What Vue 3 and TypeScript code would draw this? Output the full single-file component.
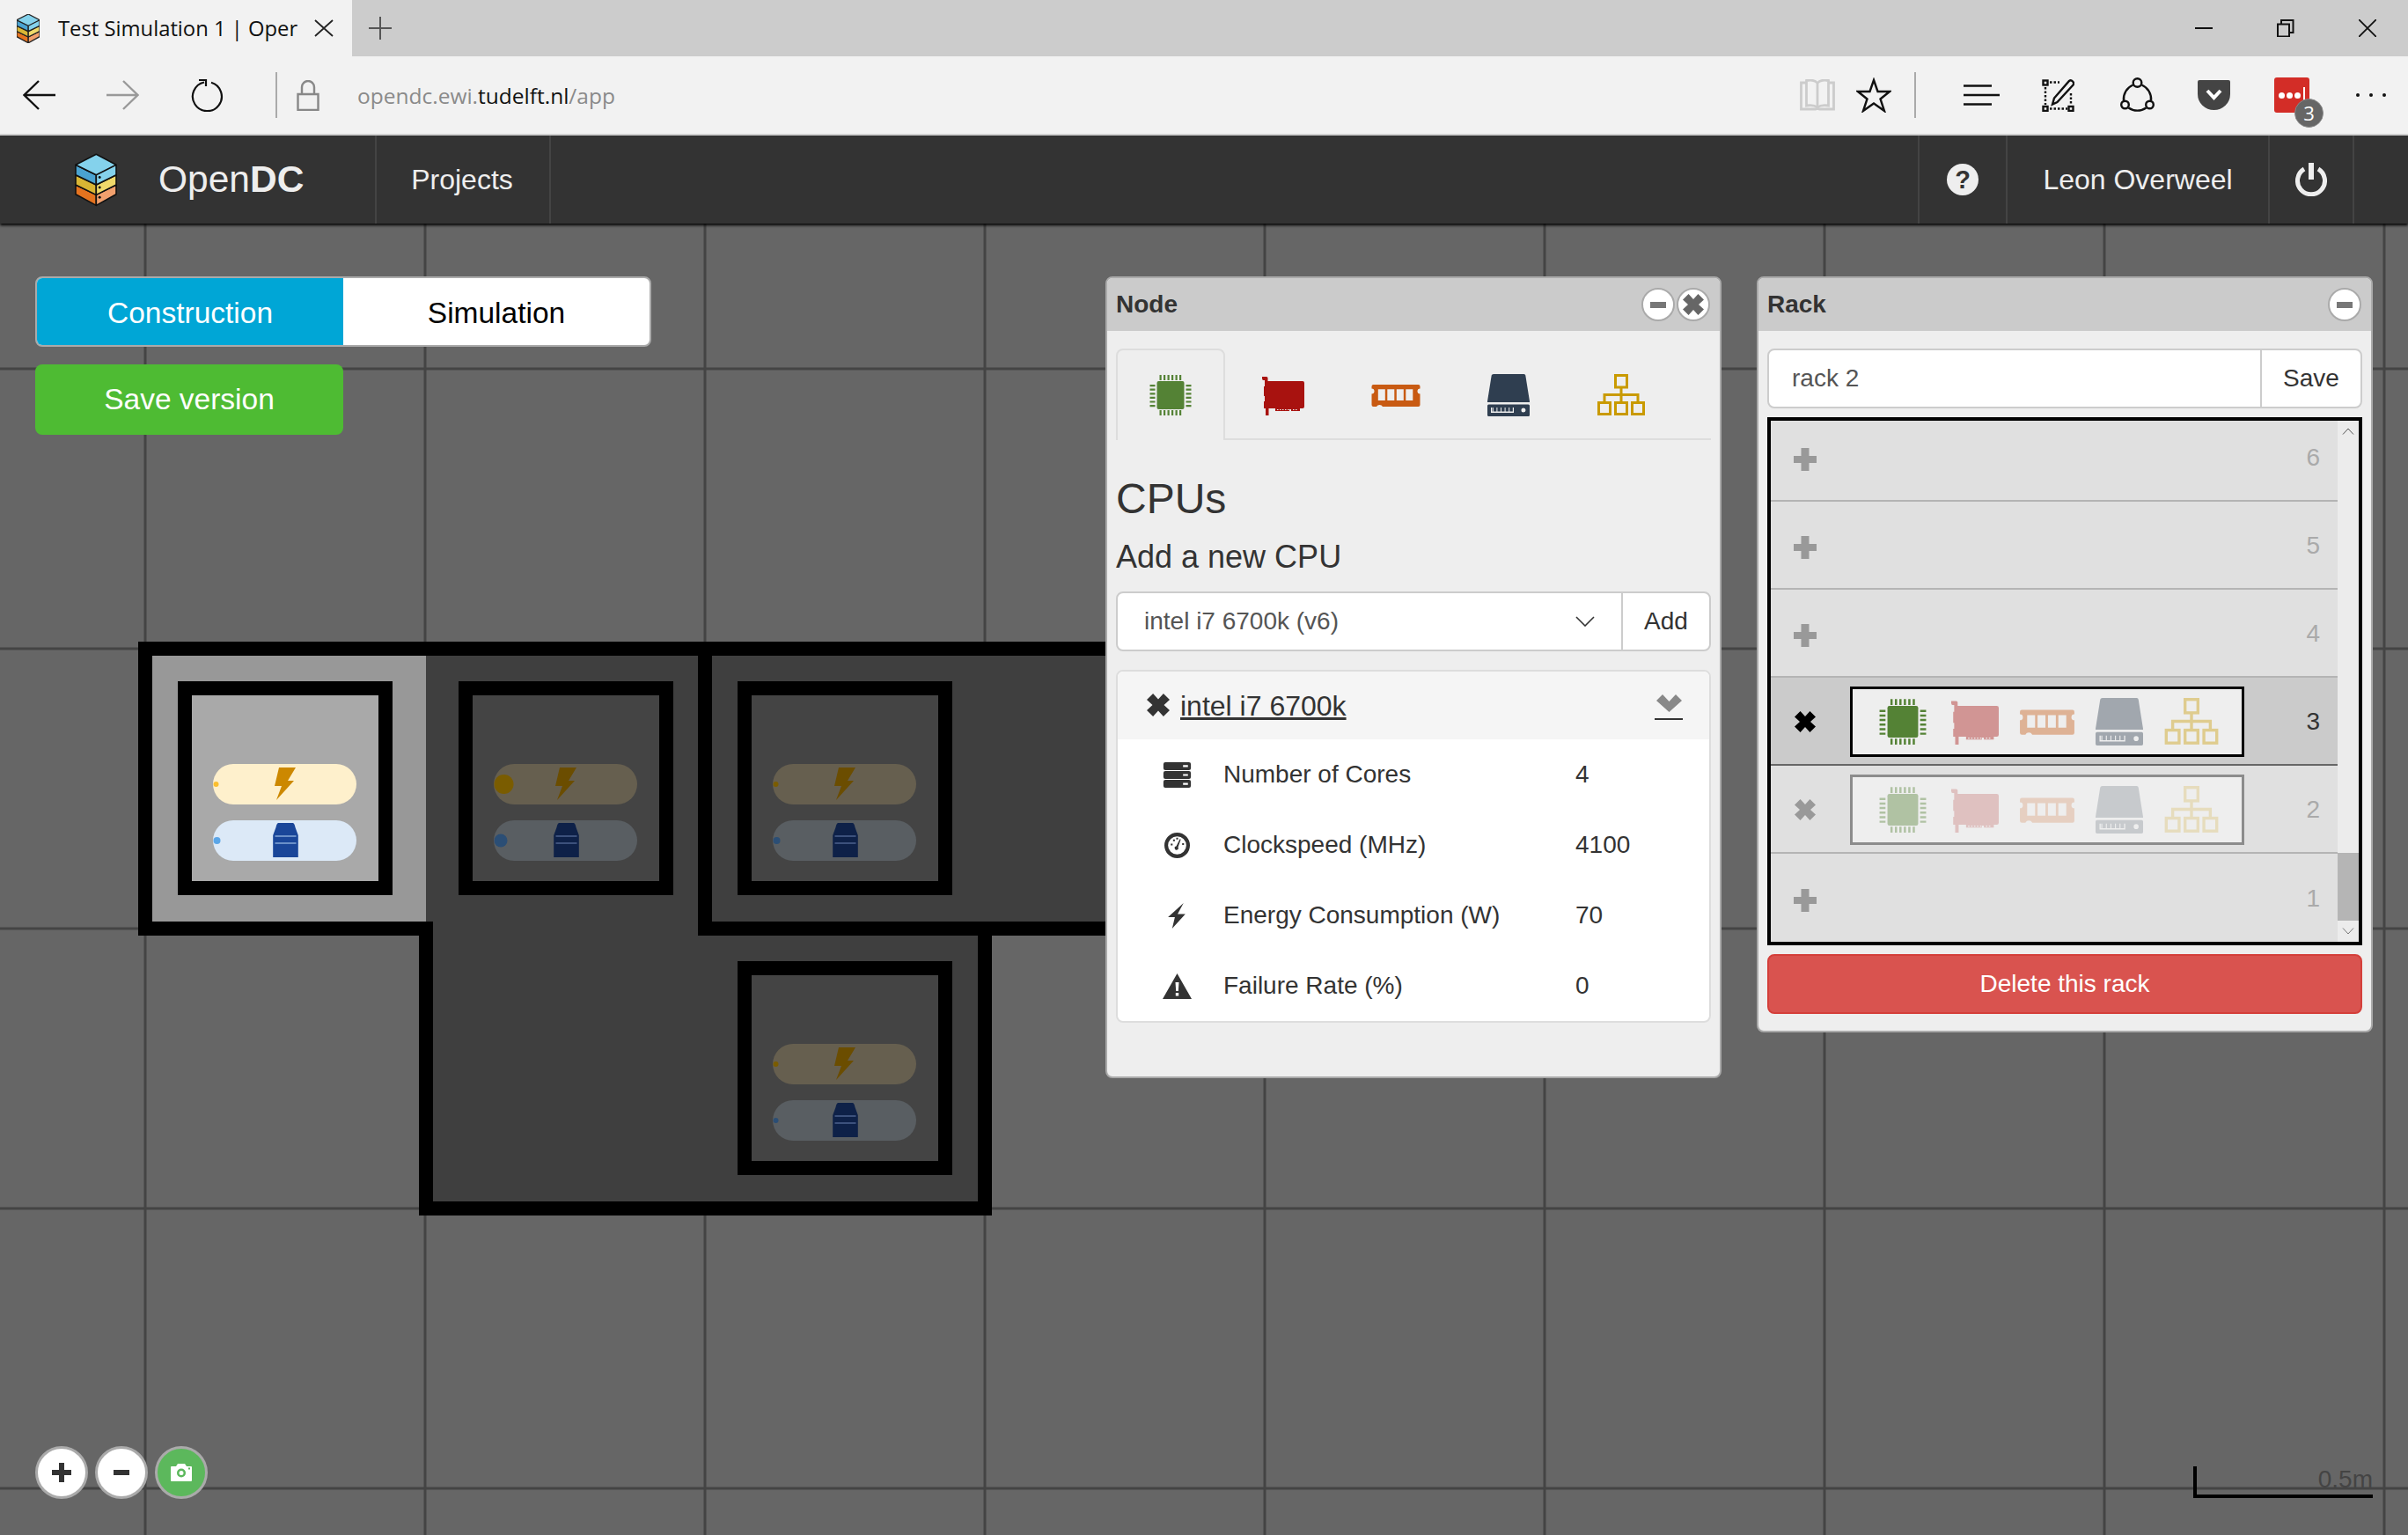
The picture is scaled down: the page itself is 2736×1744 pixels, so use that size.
<script setup lang="ts">
const gridX = Array.from({ length: 9 }, (_, i) => 165 + i * 318);
const gridY = [419, 737, 1055, 1373, 1691];

const darkTiles = [
  [484, 737],
  [801, 737],
  [1119, 737],
  [484, 1055],
  [801, 1055],
];

const racks = [
  { x: 165, y: 737, selected: true, power: 3, load: 4 },
  { x: 484, y: 737, selected: false, power: 11, load: 7.5 },
  { x: 801, y: 737, selected: false, power: 3, load: 4 },
  { x: 801, y: 1055, selected: false, power: 3, load: 3 },
];

const componentIcons = [
  { id: 'cpu', color: '#548235' },
  { id: 'gpu', color: '#a8120f' },
  { id: 'memory', color: '#c85a12' },
  { id: 'storage', color: '#2f3e50' },
  { id: 'network', color: '#c99a00' },
];

const cpuStats = [
  { icon: 'i-server', label: 'Number of Cores', value: '4' },
  { icon: 'i-gauge', label: 'Clockspeed (MHz)', value: '4100' },
  { icon: 'i-flash', label: 'Energy Consumption (W)', value: '70' },
  { icon: 'i-warn', label: 'Failure Rate (%)', value: '0' },
];

type RackUnit = { n: number; filled: boolean; active: boolean };
const units: RackUnit[] = [
  { n: 6, filled: false, active: false },
  { n: 5, filled: false, active: false },
  { n: 4, filled: false, active: false },
  { n: 3, filled: true, active: true },
  { n: 2, filled: true, active: false },
  { n: 1, filled: false, active: false },
];

// first icon of the hovered row stays solid, the rest fade
function iconOpacity(unit: RackUnit, index: number): number {
  if (unit.active) return index === 0 ? 1 : 0.4;
  return index === 0 ? 0.4 : 0.2;
}
</script>

<template>
  <div class="page">
    <!-- shared icon definitions -->
    <svg class="defs" width="0" height="0">
      <symbol id="cpu" viewBox="0 0 60 48">
        <rect x="14.5" y="8" width="31" height="32" rx="2" />
        <path d="M17.5 1h2.2v6h-2.2zM22 1h2.2v6H22zM26.5 1h2.2v6h-2.2zM31 1h2.2v6H31zM35.5 1h2.2v6h-2.2zM40 1h2.2v6H40z" />
        <path d="M17.5 41h2.2v6h-2.2zM22 41h2.2v6H22zM26.5 41h2.2v6h-2.2zM31 41h2.2v6H31zM35.5 41h2.2v6h-2.2zM40 41h2.2v6H40z" />
        <path d="M6.5 12h6v2.2h-6zM6.5 16.6h6v2.2h-6zM6.5 21.2h6v2.2h-6zM6.5 25.8h6v2.2h-6zM6.5 30.4h6v2.2h-6zM6.5 35h6v2.2h-6z" />
        <path d="M47.5 12h6v2.2h-6zM47.5 16.6h6v2.2h-6zM47.5 21.2h6v2.2h-6zM47.5 25.8h6v2.2h-6zM47.5 30.4h6v2.2h-6zM47.5 35h6v2.2h-6z" />
      </symbol>
      <symbol id="gpu" viewBox="0 0 60 48">
        <path fill-rule="evenodd" d="M6 3h5q1.500 0 1.500 1.500V8H52a2 2 0 0 1 2 2v27a2 2 0 0 1-2 2h-3v3H39v-2h-2v2H21v-3h-7.500v8H10V39H8v-8h1v-6H8V14h1V7H7.500Q6 7 6 5zM23 40h1.500v1H23zM26 40h1.500v1H26zM29 40h1.500v1H29zM32 40h1.500v1H32zM35 40h1.500v1H35zM41 40h1.500v1H41zM44 40h1.500v1H44z" />
      </symbol>
      <symbol id="memory" viewBox="0 0 60 48">
        <path fill-rule="evenodd" d="M4.500 12h51q2 0 2 2v2.500a3 3 0 0 0 0 6V35q0 2-2 2H15a4 4 0 0 0-7 0H4.500q-2 0-2-2V22.500a3 3 0 0 0 0-6V14q0-2 2-2zM9.800 17.300v12.700h8V17.300zM20.300 17.300v12.700h8V17.300zM30.800 17.300v12.700h8V17.300zM41.300 17.300v12.700h8V17.300z" />
      </symbol>
      <symbol id="storage" viewBox="0 0 60 48">
        <path d="M13 0h34.500q1.600 0 1.800 1.600L54 31v1H6v-1l4.700-29.400Q11 0 13 0z" />
        <path fill-rule="evenodd" d="M7.500 34.500h45q1.500 0 1.500 1.500v10.500q0 1.500-1.500 1.500h-45Q6 48 6 46.500V36q0-1.500 1.500-1.500zM10 38v6h26v-6h-1.200v4.600h-3.600V38h-1v4.600h-3.600V38h-1v4.600H22V38h-1v4.600h-3.600V38h-1v4.600h-3.600V38h-1v4.600H11.200V38zM47 38.500a2.500 2.500 0 1 0 0 5 2.500 2.500 0 0 0 0-5z" />
      </symbol>
      <symbol id="network" viewBox="0 0 60 48">
        <g fill="none" stroke="currentColor" stroke-width="3">
          <rect x="23.500" y="1.500" width="13" height="13.500" />
          <rect x="4.500" y="32.500" width="13" height="13" />
          <rect x="23.500" y="32.500" width="13" height="13" />
          <rect x="42.500" y="32.500" width="13" height="13" />
          <path d="M30 15v17.500M11 32.500V23.500h38v9" />
        </g>
      </symbol>
      <symbol id="i-cross" viewBox="1 1 22 22">
        <path d="M7 1l5 5.500L17 1l6 6-5.500 5 5.500 5-6 6-5-5.500L7 23l-6-6 5.500-5L1 7z" />
      </symbol>
      <symbol id="i-server" viewBox="0 0 28 26">
        <path fill-rule="evenodd" d="M2 0h24q2 0 2 2v4q0 2-2 2H2Q0 8 0 6V2q0-2 2-2zM20 3v2h5V3zM2 9h24q2 0 2 2v4q0 2-2 2H2q-2 0-2-2v-4q0-2 2-2zM20 12v2h5v-2zM2 18h24q2 0 2 2v4q0 2-2 2H2q-2 0-2-2v-4q0-2 2-2zM20 21v2h5v-2z" />
      </symbol>
      <symbol id="i-gauge" viewBox="0 0 28 28">
        <circle cx="14" cy="14" r="12" fill="none" stroke="currentColor" stroke-width="4" />
        <path d="M13 15l4-8 1 .5-3 8.500a2 2 0 1 1-2-1zM7 12h2v2H7zM9.500 7.500h2v2h-2zM13 5.500h2v2h-2zM19.500 11.500h2v2h-2z" />
      </symbol>
      <symbol id="i-flash" viewBox="0 0 28 28">
        <path d="M21 0L4 15.500h7.500L8.500 28 23 12h-8.500z" />
      </symbol>
      <symbol id="i-warn" viewBox="0 0 33 29">
        <path fill-rule="evenodd" d="M16.500 0L33 29H0zM14.500 10l.7 10h2.600l.7-10zM14.800 22v3.500h3.400V22z" />
      </symbol>
    </svg>

    <!-- browser chrome -->
    <div class="tabstrip">
      <div class="tab">
        <svg class="tab-logo" viewBox="0 0 142 180">
          <g stroke="#222" stroke-width="7" stroke-linejoin="round">
            <path fill="#e5731f" d="M0 107l72 35v37L0 140z" />
            <path fill="#f2a06d" d="M72 142l70-35v33l-70 39z" />
            <path fill="#d9b634" d="M0 72l72 35v35L0 107z" />
            <path fill="#f0d96a" d="M72 107l70-35v35l-70 35z" />
            <path fill="#4aa3d1" d="M0 37l72 35v35L0 72z" />
            <path fill="#84d2ec" d="M72 72l70-35v35l-70 35zM72 0l70 37-70 35L0 37z" />
          </g>
        </svg>
        <span class="tab-title">Test Simulation 1 | Oper</span>
        <svg class="tab-close" viewBox="0 0 22 20">
          <path d="M1 1l20 18M21 1L1 19" fill="none" stroke="#222" stroke-width="1.800" />
        </svg>
      </div>
      <svg class="new-tab" viewBox="0 0 26 26">
        <path d="M13 0v26M0 13h26" fill="none" stroke="#555" stroke-width="2" />
      </svg>
      <div class="window-btns">
        <svg viewBox="0 0 20 20" class="win-btn"><path d="M0 10h20" stroke="#111" stroke-width="2" /></svg>
        <svg viewBox="0 0 20 20" class="win-btn">
          <path d="M1 5.500h13v14H1zM5 5V1h13.500v14H15" fill="none" stroke="#111" stroke-width="2" />
        </svg>
        <svg viewBox="0 0 20 20" class="win-btn"><path d="M0 0l20 20M20 0L0 20" stroke="#111" stroke-width="1.800" /></svg>
      </div>
    </div>

    <div class="navrow">
      <svg class="nav-arrow" viewBox="0 0 37 34">
        <path d="M18 1L1.500 17 18 33M2 17h35" fill="none" stroke="#111" stroke-width="2.400" />
      </svg>
      <svg class="nav-arrow forward" viewBox="0 0 37 34">
        <path d="M19 1l16.500 16L19 33M35 17H0" fill="none" stroke="#999" stroke-width="2.400" />
      </svg>
      <svg class="nav-refresh" viewBox="0 0 38 38">
        <path d="M15 4.500a16.500 16.500 0 1 0 8 .3M9 2h8v7" fill="none" stroke="#111" stroke-width="2.200" />
      </svg>
      <span class="nav-sep"></span>
      <svg class="nav-lock" viewBox="0 0 26 35">
        <path d="M1.500 16h23v18h-23zM6 16V8a7 7 0 0 1 14 0v8" fill="none" stroke="#888" stroke-width="2.400" />
      </svg>
      <div class="url">opendc.ewi.<b>tudelft.nl</b>/app</div>
      <div class="nav-right">
        <svg class="r-book" viewBox="0 0 40 36">
          <path d="M1.500 4h6V1.500q9-1.500 12.500 3 3.500-4.500 12.500-3V4h6v30H23q-3 0-3 1-0-1-3-1H1.500zM7.500 4v26q8-1.500 12.500 2 4.500-3.500 12.500-2V4M20 5v27" fill="none" stroke="#ccc" stroke-width="2.800" />
        </svg>
        <svg class="r-star" viewBox="0 0 40 40">
          <path d="M20 3l4.500 13H38l-10.500 8.500L32 38l-12-8.500L8 38l4.500-13.500L2 16h13.500z" fill="none" stroke="#111" stroke-width="2.400" />
        </svg>
        <span class="nav-sep r-sep"></span>
        <svg class="r-hub" viewBox="0 0 41 24">
          <path d="M0 1.500h32M0 12h41M0 22.500h32" fill="none" stroke="#111" stroke-width="2.600" />
        </svg>
        <svg class="r-note" viewBox="0 0 37 37">
          <g fill="none" stroke="#111" stroke-width="2.400">
            <rect x="1.500" y="1.500" width="5" height="5" />
            <rect x="1.500" y="31" width="5" height="5" />
            <rect x="30.500" y="31" width="5" height="5" />
            <path d="M9 3.500h11M4 9v20M9 33.500h20M33 16v13" stroke-dasharray="2.500 2" />
            <path d="M12 28.500l2-7L31 2q2-1.500 4 .5t.5 4L17.500 26z" />
          </g>
        </svg>
        <svg class="r-share" viewBox="0 0 39 40">
          <g fill="none" stroke="#111" stroke-width="2.400">
            <circle cx="19.500" cy="6" r="4.800" />
            <circle cx="5.500" cy="31" r="4.300" />
            <circle cx="33.500" cy="31" r="4.300" />
            <path d="M14.500 8.500A17.500 17.500 0 0 0 4 26.500M24.500 8.500A17.500 17.500 0 0 1 35 26.500M9.500 34.500A17.500 17.500 0 0 0 29.500 34.500" />
          </g>
        </svg>
        <svg class="r-pocket" viewBox="0 0 37 34">
          <path d="M2 0h33q2 0 2 2v14a18.500 18 0 0 1-37 0V2q0-2 2-2z" fill="#444" />
          <path d="M11 12l7.500 8L26 12" fill="none" stroke="#fff" stroke-width="4" />
        </svg>
        <div class="r-pass">
          <span class="pass-dots"><i></i><i></i><i></i><em></em></span>
          <span class="pass-badge">3</span>
        </div>
        <div class="r-more"><i></i><i></i><i></i></div>
      </div>
    </div>

    <!-- app header -->
    <header class="topbar">
      <div class="brand">
        <svg class="brand-logo" viewBox="-3 -3 148 186">
          <g stroke="#111" stroke-width="5" stroke-linejoin="round">
            <path fill="#e5731f" d="M0 107l72 35v37L0 140z" />
            <path fill="#f2a06d" d="M72 142l70-35v33l-70 39z" />
            <path fill="#d9b634" d="M0 72l72 35v35L0 107z" />
            <path fill="#f0d96a" d="M72 107l70-35v35l-70 35z" />
            <path fill="#4aa3d1" d="M0 37l72 35v35L0 72z" />
            <path fill="#84d2ec" d="M72 72l70-35v35l-70 35zM72 0l70 37-70 35L0 37z" />
          </g>
          <circle cx="84" cy="81" r="4.500" fill="#111" />
          <circle cx="84" cy="116" r="4.500" fill="#111" />
          <circle cx="84" cy="151" r="4.500" fill="#111" />
        </svg>
        <span class="brand-name">Open<b>DC</b></span>
      </div>
      <div class="bar-item projects">Projects</div>
      <div class="bar-right">
        <div class="bar-item help"><span class="help-mark">?</span></div>
        <div class="bar-item user">Leon Overweel</div>
        <div class="bar-item power">
          <svg viewBox="0 0 36 38" width="36" height="38">
            <path d="M10 7a15.500 15.500 0 1 0 16 0" fill="none" stroke="#eee" stroke-width="5" />
            <path d="M18 0v19" stroke="#eee" stroke-width="6" />
          </svg>
        </div>
      </div>
    </header>

    <main class="stage">
      <svg class="floor" viewBox="0 254 2736 1490">
        <g stroke="#444" stroke-width="3">
          <line v-for="x in gridX" :key="'x' + x" :x1="x" :x2="x" y1="254" y2="1744" />
          <line v-for="y in gridY" :key="'y' + y" x1="0" x2="2736" :y1="y" :y2="y" />
        </g>
        <rect v-for="t in darkTiles" :key="t.join()" :x="t[0]" :y="t[1]" width="318" height="318" fill="#3f3f3f" />
        <rect x="165" y="737" width="319" height="318" fill="#989898" />
        <path
          d="M165 737H1437M165 737V1055H484M484 1055V1373H1119V1055M801 737V1055H1437"
          fill="none"
          stroke="#000"
          stroke-width="16"
          stroke-linecap="square"
        />
        <g v-for="r in racks" :key="r.x + '-' + r.y" :transform="`translate(${r.x} ${r.y})`">
          <rect x="45" y="45" width="228" height="227" :fill="r.selected ? '#a9a9a9' : '#444'" stroke="#000" stroke-width="16" />
          <rect x="77" y="131" width="163" height="46" rx="23" :fill="r.selected ? '#fef0cc' : '#665f4f'" />
          <rect x="77" y="195" width="163" height="46" rx="23" :fill="r.selected ? '#dce9f7' : '#595e62'" />
          <circle :cx="77 + r.power + 0.5" cy="154" :r="r.power" :fill="r.selected ? '#fbbf2e' : '#7a5c00'" />
          <circle :cx="77 + r.load + 0.5" cy="218" :r="r.load" :fill="r.selected ? '#5aa6e8' : '#2b4e75'" />
          <path
            transform="translate(147 135)"
            d="M5 0h19l-9 15h7L2 37l6-16H0z"
            :fill="r.selected ? '#cc8800' : '#6b4d00'"
          />
          <g transform="translate(159.500 198)">
            <path d="M-8 0H8Q10 0 11 5l3.300 9V39h-28.600V14L-11 5Q-10 0-8 0z" :fill="r.selected ? '#1a4699' : '#0e2148'" />
            <path d="M-12 15h24M-12 23h24" :stroke="r.selected ? '#6a8fc8' : '#3c517c'" stroke-width="2" />
          </g>
        </g>
      </svg>

      <div class="mode-box">
        <div class="mode-toggle">
          <div class="mode active">Construction</div>
          <div class="mode">Simulation</div>
        </div>
        <button class="save-version">Save version</button>
      </div>

      <section class="panel node-panel">
        <div class="panel-head">
          <span class="panel-title">Node</span>
          <span class="round-btn"><i class="dash"></i></span>
          <span class="round-btn">
            <svg width="24" height="24" class="gray-x"><use href="#i-cross" /></svg>
          </span>
        </div>
        <div class="panel-body">
          <div class="comp-tabs">
            <div
              v-for="(c, i) in componentIcons"
              :key="c.id"
              class="comp-tab"
              :class="{ current: i === 0 }"
              :style="{ color: c.color }"
            >
              <svg width="60" height="48"><use :href="'#' + c.id" /></svg>
            </div>
          </div>
          <h3 class="heading">CPUs</h3>
          <h4 class="subheading">Add a new CPU</h4>
          <div class="input-group cpu-group">
            <div class="field">
              <span>intel i7 6700k (v6)</span>
              <svg class="caret" viewBox="0 0 22 12" width="22" height="12">
                <path d="M1 1l10 10L21 1" fill="none" stroke="#333" stroke-width="1.600" />
              </svg>
            </div>
            <div class="addon add">Add</div>
          </div>
          <div class="card">
            <div class="card-head">
              <svg width="26" height="26" class="card-x"><use href="#i-cross" /></svg>
              <span class="card-title">intel i7 6700k</span>
              <span class="card-toggle">
                <svg viewBox="0 0 29 20" width="29" height="20">
                  <path d="M0 7l7-7 7.500 8L22 0l7 7-14.500 13z" fill="#888" />
                </svg>
              </span>
            </div>
            <div v-for="s in cpuStats" :key="s.label" class="stat-row">
              <svg class="stat-icon" :class="s.icon"><use :href="'#' + s.icon" /></svg>
              <span>{{ s.label }}</span>
              <span>{{ s.value }}</span>
            </div>
          </div>
        </div>
      </section>

      <section class="panel rack-panel">
        <div class="panel-head">
          <span class="panel-title">Rack</span>
          <span class="round-btn"><i class="dash"></i></span>
        </div>
        <div class="panel-body">
          <div class="input-group name-group">
            <div class="field">rack 2</div>
            <div class="addon save">Save</div>
          </div>
          <div class="unit-box">
            <div class="unit-list">
              <div
                v-for="u in units"
                :key="u.n"
                class="unit"
                :class="{ active: u.active }"
              >
                <svg v-if="u.filled" class="unit-btn cross" width="24" height="24"><use href="#i-cross" /></svg>
                <svg v-else class="unit-btn plus" viewBox="0 0 26 26" width="26" height="26">
                  <path d="M8.500 0h9v9H26v8h-8.500v9h-9v-9H0V9h8.500z" />
                </svg>
                <div v-if="u.filled" class="unit-slots">
                  <svg
                    v-for="(c, i) in componentIcons"
                    :key="c.id"
                    width="68"
                    height="54"
                    :style="{ color: c.color, opacity: iconOpacity(u, i) }"
                  ><use :href="'#' + c.id" /></svg>
                </div>
                <span class="unit-no">{{ u.n }}</span>
              </div>
            </div>
            <div class="scroller">
              <svg class="arrow" viewBox="0 0 14 8" width="14" height="8">
                <path d="M1 7.500L7 1l6 6.500" fill="none" stroke="#555" stroke-width="1" />
              </svg>
              <div class="thumb"></div>
              <svg class="arrow" viewBox="0 0 14 8" width="14" height="8">
                <path d="M1 .500L7 7l6-6.500" fill="none" stroke="#777" stroke-width="1" />
              </svg>
            </div>
          </div>
          <button class="delete-rack">Delete this rack</button>
        </div>
      </section>

      <div class="zoom-btns">
        <span class="zoom-btn">
          <svg viewBox="0 0 22 22" width="22" height="22"><path d="M8 0h6v8h8v6h-8v8H8v-8H0V8h8z" fill="#333" /></svg>
        </span>
        <span class="zoom-btn">
          <svg viewBox="0 0 18 6" width="18" height="6"><path d="M0 0h18v6H0z" fill="#333" /></svg>
        </span>
        <span class="zoom-btn camera">
          <svg viewBox="0 0 24 20" width="24" height="20">
            <path fill="#fff" fill-rule="evenodd" d="M1 3h5l2-3h8l2 3h5q1 0 1 1v15q0 1-1 1H1q-1 0-1-1V4q0-1 1-1zM12 5.500a5 5 0 1 0 0 10 5 5 0 0 0 0-10zM12 8a2.500 2.500 0 1 1 0 5 2.500 2.500 0 0 1 0-5zM20 4.500v2h2v-2z" />
          </svg>
        </span>
      </div>

      <div class="scale">0.5m</div>
    </main>
  </div>
</template>

<style>
html,
body {
  margin: 0;
  background: #666;
}
</style>

<style scoped>
.page {
  width: 2736px;
  height: 1744px;
  display: flex;
  flex-direction: column;
  overflow: hidden;
  font-family: "Liberation Sans", Arial, sans-serif;
  color: #333;
}

.defs {
  position: absolute;
}

/* browser chrome */
.tabstrip {
  height: 64px;
  flex: none;
  display: flex;
  align-items: center;
  background: #ccc;
}

.tab {
  width: 400px;
  height: 64px;
  display: flex;
  align-items: center;
  background: #f2f2f2;
  font-family: "Open Sans", sans-serif;
  font-size: 23.800px;
  color: #111;
}

.tab-logo {
  width: 26px;
  height: 33px;
  margin-left: 19px;
}

.tab-title {
  width: 270px;
  margin-left: 21px;
  white-space: nowrap;
}

.tab-close {
  width: 22px;
  height: 20px;
  margin-left: 21px;
}

.new-tab {
  width: 26px;
  height: 26px;
  margin-left: 19px;
}

.window-btns {
  margin-left: auto;
  display: flex;
  gap: 73px;
  padding-right: 36px;
}

.win-btn {
  width: 20px;
  height: 20px;
}

.navrow {
  height: 88px;
  flex: none;
  display: flex;
  align-items: center;
  background: #f2f2f2;
  border-bottom: 2px solid #d4d4d4;
  position: relative;
}

.nav-arrow {
  width: 37px;
  height: 34px;
  margin-left: 26px;
}

.nav-arrow.forward {
  margin-left: 58px;
}

.nav-refresh {
  width: 38px;
  height: 38px;
  margin-left: 59px;
}

.nav-sep {
  width: 2px;
  height: 52px;
  background: #aaa;
  margin-left: 58px;
}

.nav-lock {
  width: 26px;
  height: 35px;
  margin-left: 22px;
}

.url {
  margin-left: 43px;
  font-family: "Open Sans", sans-serif;
  font-size: 24.500px;
  color: #8a8a8a;
}

.url b {
  font-weight: 400;
  color: #111;
}

.nav-right {
  margin-left: auto;
  display: flex;
  align-items: center;
  padding-right: 25px;
}

.r-book {
  width: 40px;
  height: 36px;
}

.r-star {
  width: 40px;
  height: 40px;
  margin-left: 24.500px;
}

.r-sep {
  margin-left: 25.500px;
}

.r-hub {
  width: 41px;
  height: 24px;
  margin-left: 54.500px;
}

.r-note {
  width: 37px;
  height: 37px;
  margin-left: 48px;
}

.r-share {
  width: 39px;
  height: 40px;
  margin-left: 52px;
}

.r-pocket {
  width: 37px;
  height: 34px;
  margin-left: 49px;
}

.r-pass {
  width: 40px;
  height: 40px;
  margin-left: 50px;
  background: #d32d27;
  border-radius: 3px;
  position: relative;
  display: flex;
  align-items: center;
  justify-content: center;
}

.pass-dots {
  display: flex;
  align-items: center;
  gap: 2px;
}

.pass-dots i {
  width: 7px;
  height: 7px;
  border-radius: 50%;
  background: #fff;
}

.pass-dots em {
  width: 1.500px;
  height: 18px;
  margin-left: 1px;
  background: #fff;
}

.pass-badge {
  position: absolute;
  right: -16px;
  bottom: -17px;
  width: 31px;
  height: 31px;
  border-radius: 50%;
  border: 1px solid #888;
  background: #666;
  color: #fff;
  font-family: "Open Sans", sans-serif;
  font-size: 22px;
  line-height: 31px;
  text-align: center;
}

.r-more {
  display: flex;
  gap: 11px;
  margin-left: 53px;
}

.r-more i {
  width: 4px;
  height: 4px;
  border-radius: 50%;
  background: #111;
}

/* app header */
.topbar {
  height: 100px;
  flex: none;
  display: flex;
  align-items: stretch;
  background: #333;
  color: #eee;
  font-size: 32px;
  box-shadow: 0 2px 3px #000;
  position: relative;
  z-index: 2;
}

.brand {
  width: 428px;
  display: flex;
  align-items: center;
  padding-left: 85px;
  box-sizing: border-box;
  border-right: 2px solid #444;
}

.brand-logo {
  width: 48px;
  height: 61px;
}

.brand-name {
  margin-left: 47px;
  font-size: 42.500px;
}

.bar-item {
  display: flex;
  align-items: center;
  justify-content: center;
  box-sizing: border-box;
}

.projects {
  width: 198px;
  padding-right: 2px;
  border-right: 2px solid #444;
}

.bar-right {
  margin-left: auto;
  display: flex;
  padding-right: 61px;
}

.bar-right .bar-item {
  border-left: 2px solid #444;
}

.help {
  width: 100px;
}

.help-mark {
  width: 36px;
  height: 36px;
  border-radius: 50%;
  background: #eee;
  color: #333;
  font-size: 29px;
  font-weight: 700;
  line-height: 36px;
  text-align: center;
}

.user {
  width: 298px;
}

.bar-right .power {
  width: 98px;
  border-right: 2px solid #444;
}

/* canvas */
.stage {
  flex: 1;
  position: relative;
  background: #666;
}

.floor {
  position: absolute;
  inset: 0;
  width: 100%;
  height: 100%;
}

.mode-box {
  position: absolute;
  left: 40px;
  top: 60px;
  width: 700px;
  font-size: 33.500px;
}

.mode-toggle {
  display: flex;
  height: 80px;
  box-sizing: border-box;
  border: 2px solid #aaa;
  border-radius: 8px;
  overflow: hidden;
  background: #fff;
}

.mode {
  flex: 1;
  display: flex;
  align-items: center;
  justify-content: center;
  padding-top: 3px;
  color: #000;
}

.mode.active {
  background: #00a6d6;
  color: #fff;
}

.save-version {
  display: block;
  width: 350px;
  height: 80px;
  margin-top: 20px;
  border: none;
  border-radius: 8px;
  background: #4ebb33;
  color: #fff;
  font: inherit;
}

/* side panels */
.panel {
  position: absolute;
  top: 60px;
  box-sizing: border-box;
  border: 2px solid #aaa;
  border-radius: 8px;
  background: #eee;
  overflow: hidden;
}

.node-panel {
  left: 1256px;
  width: 700px;
  height: 911px;
}

.rack-panel {
  left: 1996px;
  width: 700px;
  height: 859px;
}

.panel-head {
  height: 60px;
  display: flex;
  align-items: center;
  gap: 2px;
  padding: 0 11px 0 10px;
  background: #cbcbcb;
}

.panel-title {
  margin-right: auto;
  font-size: 28px;
  font-weight: 700;
}

.round-btn {
  width: 38px;
  height: 38px;
  box-sizing: border-box;
  border: 2px solid #aaa;
  border-radius: 50%;
  background: #fff;
  display: flex;
  align-items: center;
  justify-content: center;
}

.dash {
  width: 18px;
  height: 7px;
  background: #777;
}

.gray-x {
  color: #666;
  fill: #666;
}

.panel-body {
  padding: 20px 10px;
}

.comp-tabs {
  display: flex;
  gap: 4px;
  height: 104px;
  box-sizing: border-box;
  border-bottom: 2px solid #ddd;
}

.comp-tab {
  width: 124px;
  height: 104px;
  box-sizing: border-box;
  display: flex;
  align-items: center;
  justify-content: center;
  border: 2px solid transparent;
  border-bottom: none;
}

.comp-tab.current {
  background: #eee;
  border-color: #ddd;
  border-radius: 8px 8px 0 0;
}

.comp-tab svg,
.unit-slots svg {
  fill: currentColor;
}

.heading {
  margin: 41px 0 0;
  font-size: 48px;
  line-height: 52px;
  font-weight: 400;
}

.subheading {
  margin: 20px 0 0;
  font-size: 36px;
  line-height: 40px;
  font-weight: 400;
}

.input-group {
  display: flex;
  height: 68px;
  box-sizing: border-box;
  border: 2px solid #ccc;
  border-radius: 8px;
  background: #fff;
  font-size: 28px;
}

.cpu-group {
  margin-top: 19px;
}

.field {
  flex: 1;
  display: flex;
  align-items: center;
  justify-content: space-between;
  padding: 0 30px 0 30px;
  color: #555;
}

.name-group .field {
  padding-left: 26px;
}

.caret {
  margin-right: 0;
}

.addon {
  display: flex;
  align-items: center;
  justify-content: center;
  border-left: 2px solid #ccc;
}

.add {
  width: 98px;
}

.card {
  margin-top: 21px;
  box-sizing: border-box;
  height: 401px;
  border: 2px solid #ddd;
  border-radius: 8px;
  background: #fff;
  overflow: hidden;
  font-size: 28px;
}

.card-head {
  height: 77px;
  display: flex;
  align-items: center;
  background: #f5f5f5;
  padding-left: 33px;
}

.card-x {
  margin-top: -2px;
  fill: #333;
}

.card-title {
  margin-left: 12px;
  padding-top: 2px;
  font-size: 32px;
  text-decoration: underline;
}

.card-toggle {
  margin-left: auto;
  margin-right: 30px;
  margin-top: 4px;
  width: 32px;
  height: 27px;
  border-bottom: 2px solid #333;
}

.card-toggle svg {
  display: block;
  margin: 0 auto;
}

.stat-row {
  height: 80px;
  display: grid;
  grid-template-columns: 120px 400px 1fr;
  align-items: center;
}

.stat-icon {
  justify-self: center;
  margin-left: 14px;
  width: 33px;
  height: 29px;
  fill: #333;
}

.unit-box {
  display: flex;
  height: 600px;
  margin-top: 10px;
  box-sizing: border-box;
  border: 4px solid #000;
}

.unit-list {
  flex: 1;
  overflow: hidden;
  background: #e0e0e0;
}

.unit {
  height: 100px;
  box-sizing: border-box;
  display: flex;
  align-items: center;
  padding: 2px 0 0 26px;
  border-bottom: 2px solid #b4b4b4;
}

.unit:first-child {
  margin-top: -8px;
}

.unit:last-child {
  border-bottom: none;
}

.unit.active {
  background: #cbcbcb;
  border-bottom-color: #666;
}

.unit-btn {
  flex: none;
  width: 26px;
  fill: #999;
}

.unit-btn.plus {
  margin-top: 4px;
}

.unit.active .unit-btn {
  fill: #000;
}

.unit-slots {
  width: 448px;
  height: 80px;
  margin-left: 38px;
  box-sizing: border-box;
  display: flex;
  align-items: center;
  gap: 14px;
  padding-left: 23px;
  border: 3px solid #8c8c8c;
  background: #eee;
}

.unit.active .unit-slots {
  border-color: #000;
}

.unit-no {
  margin-left: auto;
  padding-right: 20px;
  font-size: 28px;
  color: #aaa;
}

.unit.active .unit-no {
  color: #333;
}

.scroller {
  width: 24px;
  flex: none;
  display: flex;
  flex-direction: column;
  align-items: center;
  background: #ececec;
}

.arrow {
  flex: none;
  margin: 8px 0;
}

.thumb {
  width: 24px;
  height: 77px;
  margin-top: auto;
  background: #b5b5b5;
}

.delete-rack {
  display: block;
  width: 100%;
  height: 68px;
  margin-top: 10px;
  border: 2px solid #d43f3a;
  border-radius: 8px;
  background: #d9534f;
  color: #fff;
  font: inherit;
  font-size: 28px;
}

.save {
  width: 112px;
}

/* zoom controls */
.zoom-btns {
  position: absolute;
  left: 40px;
  bottom: 41px;
  display: flex;
  gap: 8px;
}

.zoom-btn {
  width: 60px;
  height: 60px;
  box-sizing: border-box;
  border: 3px solid #aaa;
  border-radius: 50%;
  background: #fff;
  display: flex;
  align-items: center;
  justify-content: center;
}

.zoom-btn.camera {
  background: #5cb85c;
}

.scale {
  position: absolute;
  left: 2492px;
  top: 1412px;
  width: 204px;
  height: 36px;
  box-sizing: border-box;
  border-left: 4px solid #000;
  border-bottom: 4px solid #000;
  text-align: right;
  font-size: 28px;
  line-height: 30px;
  color: #444;
}
</style>
